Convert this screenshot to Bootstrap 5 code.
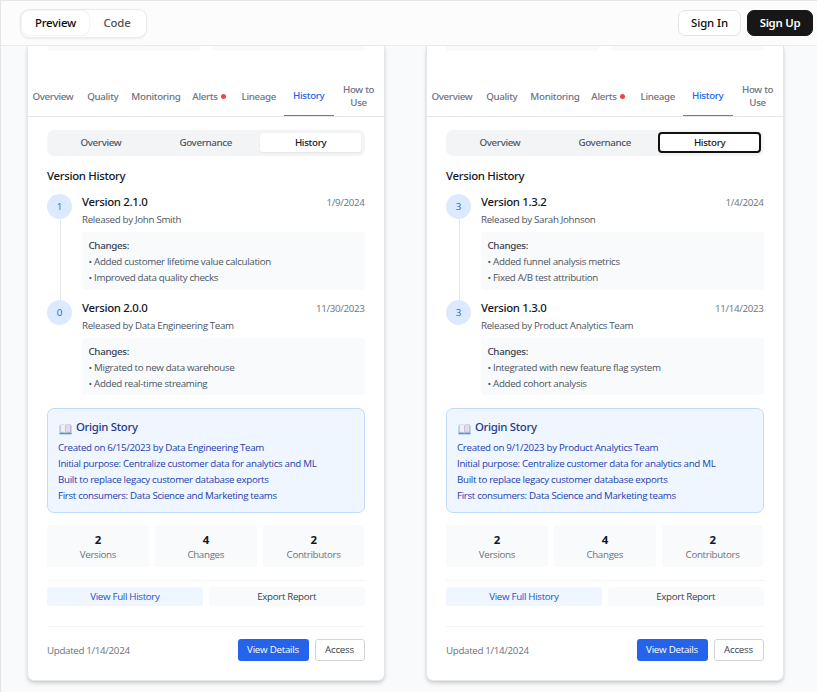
<!DOCTYPE html>
<html lang="en">
<head>
<meta charset="utf-8">
<meta name="viewport" content="width=device-width, initial-scale=1">
<title>Data products</title>
<link href="https://cdn.jsdelivr.net/npm/bootstrap@5.3.0/dist/css/bootstrap.min.css" rel="stylesheet">
<style>
html,body{height:100%}
body{font-family:"Open Sans","Noto Sans",sans-serif;font-size:9.75px;line-height:13px;letter-spacing:-.32px;color:#111827;background:#f9fafb;overflow:hidden}
.app-frame{height:692px;border-top:1px solid #e5e5e5;border-left:1px solid #e5e5e5;overflow:hidden}
.topbar{height:45px;background:#fcfcfc;border-bottom:1px solid #ebebeb;padding:0 4px 0 20px;font-family:"Noto Sans",sans-serif;font-size:11.4px;line-height:22px;font-weight:500;letter-spacing:-.2px}
.switcher{width:125px;height:27px;background:#fff;border-radius:8px;padding:1px;box-shadow:0 0 0 1px #ebebeb,0 1px 3px rgba(0,0,0,.12)}
.switcher div{height:24px;line-height:24px;color:#525252}
.switcher .current{width:67px;background:#fff;color:#0a0a0a;border-radius:7px;box-shadow:0 0 2px rgba(0,0,0,.16)}
.auths{gap:6px}
.auth{height:26px;border-radius:7px;border:1px solid #e5e5e5;background:#fff;color:#0a0a0a;font-size:11.4px;line-height:24px;font-weight:500;padding:0;letter-spacing:-.1px}
.auth.in{width:63px}.auth.up{width:66px;background:#171717;border-color:#171717;color:#fff;font-weight:600;letter-spacing:-.25px}
.product-grid{padding:0 33px 0 26px;gap:42px}
.product{width:357.5px;height:635px;background:#fff;border:1px solid #e5e7eb;border-top:0;border-radius:0 0 7px 7px;box-shadow:0 3px 5px -1px rgba(0,0,0,.16),0 1px 3px rgba(0,0,0,.08)}
.product+.product{margin-left:-.5px}
.tile-tails{padding:0 19px;gap:12px}
.tile-tails div{height:5px;background:#f9fafb;border-radius:0 0 3px 3px}
.tabs{height:46px;margin-top:20px;border-bottom:1px solid #e5e7eb;color:#6b7280;font-family:"Noto Sans",sans-serif;font-weight:500}
.tabs>div{width:50px;height:45px;text-align:center;padding-top:5px}
.tabs>.wide{width:56.5px}
.tabs .on{color:#2563eb;border-bottom:1px solid #3b82f6}
.dot{width:5px;height:5px;border-radius:50%;background:#ef4444;margin-left:3px}
.inner{padding:13px 19px 0 19px}
.segments{height:26px;background:#f3f4f6;border-radius:7px;padding:3px;gap:3px;font-family:"Noto Sans",sans-serif;font-weight:500;color:#4b5563}
.segments div{line-height:19px;height:19px;text-align:center;flex:1 1 0}
.segments .on{background:#fff;color:#111827;border-radius:3px;box-shadow:0 1px 2px rgba(0,0,0,.07)}
.segments .focused{outline:2px solid #101010;outline-offset:-1px;border-radius:3px}
.heading{font-family:"Noto Sans",sans-serif;font-size:11.4px;line-height:16px;font-weight:500;margin:12px 0 10px}
.entry{height:106px;gap:10px}
.entry.last{height:95px}
.rail{width:25px}
.num{width:25px;height:25px;border-radius:50%;background:#dbeafe;color:#2563eb;line-height:26px;text-align:center;font-weight:500}
.line{width:1px;flex:1;background:#e5e7eb;margin-left:1px}
.title{font-family:"Noto Sans",sans-serif;font-size:11.4px;line-height:16px;font-weight:500}
.date{color:#6b7280;line-height:17px}
.by{color:#4b5563;margin-top:2px}
.changes{background:#f9fafb;border-radius:3px;padding:7px 6.5px;height:58px;margin-top:6px;color:#4b5563}
.changes b{display:block;font-family:"Noto Sans",sans-serif;font-weight:500;color:#374151;margin-bottom:3px}
.changes div{margin-bottom:3px}
.last .changes{height:57px}
.origin{margin-top:13px;height:105px;background:#eff6ff;border:1px solid #bfdbfe;border-radius:7px;padding:10px;color:#1e40af;line-height:16px}
.origin .name{font-family:"Noto Sans",sans-serif;font-size:11.4px;font-weight:500;color:#1e3a8a;margin-bottom:5px;gap:4px}
.stats{gap:6px;margin-top:12px}
.stats>div{flex:1 1 0;height:42px;background:#f9fafb;border-radius:3px;text-align:center;padding-top:7px;color:#6b7280}
.stats strong{display:block;font-size:11.4px;line-height:16px;font-weight:700;color:#111827}
.actions{border-top:1px solid #f3f4f6;margin-top:13px;padding-top:6px;gap:6px}
.actions div{height:19px;line-height:19px;text-align:center;border-radius:3px;flex:1 1 0}
.actions .full{background:#eff6ff;color:#1d4ed8}
.actions .report{background:#f9fafb;color:#374151}
.foot{border-top:1px solid #f3f4f6;margin-top:20px;padding-top:12px;gap:6px;color:#6b7280}
.foot .btn{--bs-btn-border-radius:3px;height:22px;font-size:9.75px;line-height:20px;padding:0;letter-spacing:-.25px}
.foot .details{width:71px;background:#2563eb;color:#fff}
.foot .access{width:50px;background:#fff;border-color:#d1d5db;color:#374151}
</style>
<script src="https://cdn.jsdelivr.net/npm/bootstrap@5.3.0/dist/js/bootstrap.bundle.min.js"></script>
</head>
<body>
<div class="app-frame">
<header class="topbar d-flex align-items-center justify-content-between">
  <div class="switcher d-flex text-center"><div class="current">Preview</div><div class="flex-fill">Code</div></div>
  <div class="auths d-flex"><button class="btn auth in">Sign In</button><button class="btn auth up">Sign Up</button></div>
</header>
<main class="product-grid d-flex" id="products"></main>
</div>
<script>
const products = [
  {team:'Data Engineering Team', created:'6/15/2023', focused:false, versions:[
    {n:1,v:'2.1.0',by:'John Smith',date:'1/9/2024',changes:['Added customer lifetime value calculation','Improved data quality checks']},
    {n:0,v:'2.0.0',by:'Data Engineering Team',date:'11/30/2023',changes:['Migrated to new data warehouse','Added real-time streaming']}]},
  {team:'Product Analytics Team', created:'9/1/2023', focused:true, versions:[
    {n:3,v:'1.3.2',by:'Sarah Johnson',date:'1/4/2024',changes:['Added funnel analysis metrics','Fixed A/B test attribution']},
    {n:3,v:'1.3.0',by:'Product Analytics Team',date:'11/14/2023',changes:['Integrated with new feature flag system','Added cohort analysis']}]}
];
const book = `<svg class="mt-1" width="14" height="12" viewBox="0 0 14 12"><path d="M1.5 2.5V11h12V2.5" fill="#8cb9e6"/><path d="M1.5 10h12v1.3h-12z" fill="#5b93d1"/><path d="M2.5 1.5q3-.7 5 .7v7.6q-2-1.2-5-.6z" fill="#f3eef3" stroke="#c9c4d4" stroke-width=".5"/><path d="M12.5 1.5q-3-.7-5 .7v7.6q2-1.2 5-.6z" fill="#e3dce8" stroke="#b9b3c8" stroke-width=".5"/></svg>`;
const entry = (e, last) => `
  <div class="entry d-flex ${last ? 'last' : ''}">
    <div class="rail d-flex flex-column align-items-center"><div class="num">${e.n}</div>${last ? '' : '<div class="line"></div>'}</div>
    <div class="flex-fill">
      <div class="d-flex justify-content-between"><span class="title">Version ${e.v}</span><span class="date">${e.date}</span></div>
      <div class="by">Released by ${e.by}</div>
      <div class="changes"><b>Changes:</b>${e.changes.map(c => `<div>• ${c}</div>`).join('')}</div>
    </div>
  </div>`;
const tab = (label, extra = '') => `<div class="d-flex justify-content-center align-items-center ${extra}">${label}</div>`;
document.getElementById('products').innerHTML = products.map(p => `
<article class="product flex-shrink-0">
  <div class="tile-tails d-flex"><div class="flex-fill"></div><div class="flex-fill"></div></div>
  <div class="tabs d-flex">${tab('Overview')}${tab('Quality')}${tab('Monitoring', 'wide')}${tab('Alerts<span class="dot"></span>')}${tab('Lineage')}${tab('History', 'on')}${tab('How to<br>Use')}</div>
  <div class="inner">
    <div class="segments d-flex"><div>Overview</div><div>Governance</div><div class="on ${p.focused ? 'focused' : ''}">History</div></div>
    <div class="heading">Version History</div>
    ${entry(p.versions[0], false)}${entry(p.versions[1], true)}
    <div class="origin">
      <div class="name d-flex align-items-center">${book}<span>Origin Story</span></div>
      <div>Created on ${p.created} by ${p.team}</div>
      <div>Initial purpose: Centralize customer data for analytics and ML</div>
      <div>Built to replace legacy customer database exports</div>
      <div>First consumers: Data Science and Marketing teams</div>
    </div>
    <div class="stats d-flex"><div><strong>2</strong>Versions</div><div><strong>4</strong>Changes</div><div><strong>2</strong>Contributors</div></div>
    <div class="actions d-flex"><div class="full">View Full History</div><div class="report">Export Report</div></div>
    <div class="foot d-flex align-items-center"><span class="me-auto">Updated 1/14/2024</span><button class="btn details">View Details</button><button class="btn access">Access</button></div>
  </div>
</article>`).join('');
</script>
</body>
</html>
